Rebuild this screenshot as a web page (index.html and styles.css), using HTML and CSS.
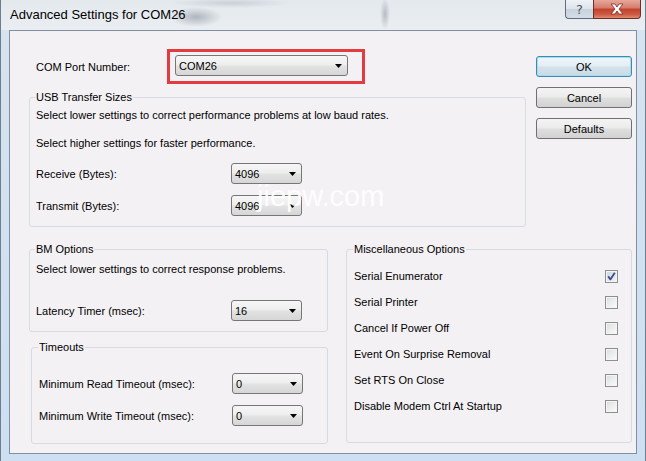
FILE: index.html
```html
<!DOCTYPE html>
<html>
<head>
<meta charset="utf-8">
<title>Advanced Settings for COM26</title>
<link rel="stylesheet" href="styles.css">
</head>
<body>
<div class="window">
  <div class="titlebar">
    <div class="title">Advanced Settings for COM26</div>
    <div class="tb-btn help">?</div>
    <div class="tb-btn close">
      <svg width="16" height="12" viewBox="0 0 16 12"><path d="M2 1 L6 1 L8 4 L10 1 L14 1 L10 6 L14 11 L10 11 L8 8 L6 11 L2 11 L6 6 Z" fill="#fff" stroke="#7a2b20" stroke-width="0.8" stroke-linejoin="round"/></svg>
    </div>
  </div>
  <div class="client">
    <div class="top">
      <div class="top-left">
        <div class="com-row">
          <span class="com-label">COM Port Number:</span>
          <div class="highlight">
            <div class="combo w-com"><span>COM26</span><svg class="arrow" width="7" height="4" viewBox="0 0 7 4"><path d="M0 0 H7 L3.5 4 Z" fill="#000"/></svg></div>
          </div>
        </div>
        <fieldset class="group usb">
          <legend>USB Transfer Sizes</legend>
          <p class="line l1">Select lower settings to correct performance problems at low baud rates.</p>
          <p class="line l2">Select higher settings for faster performance.</p>
          <div class="row r-recv"><span class="row-label w195">Receive (Bytes):</span><div class="combo w-small"><span>4096</span><svg class="arrow" width="7" height="4" viewBox="0 0 7 4"><path d="M0 0 H7 L3.5 4 Z" fill="#000"/></svg></div></div>
          <div class="row r-trans"><span class="row-label w195">Transmit (Bytes):</span><div class="combo w-small"><span>4096</span><svg class="arrow" width="7" height="4" viewBox="0 0 7 4"><path d="M0 0 H7 L3.5 4 Z" fill="#000"/></svg></div></div>
        </fieldset>
      </div>
      <div class="buttons">
        <div class="btn default">OK</div>
        <div class="btn">Cancel</div>
        <div class="btn">Defaults</div>
      </div>
    </div>
    <div class="bottom">
      <div class="bottom-left">
        <fieldset class="group bm">
          <legend>BM Options</legend>
          <p class="line bm-l1">Select lower settings to correct response problems.</p>
          <div class="row r-lat"><span class="row-label w195">Latency Timer (msec):</span><div class="combo w-small"><span>16</span><svg class="arrow" width="7" height="4" viewBox="0 0 7 4"><path d="M0 0 H7 L3.5 4 Z" fill="#000"/></svg></div></div>
        </fieldset>
        <fieldset class="group timeouts">
          <legend>Timeouts</legend>
          <div class="row r-read"><span class="row-label w193">Minimum Read Timeout (msec):</span><div class="combo w-small"><span>0</span><svg class="arrow" width="7" height="4" viewBox="0 0 7 4"><path d="M0 0 H7 L3.5 4 Z" fill="#000"/></svg></div></div>
          <div class="row r-write"><span class="row-label w193">Minimum Write Timeout (msec):</span><div class="combo w-small"><span>0</span><svg class="arrow" width="7" height="4" viewBox="0 0 7 4"><path d="M0 0 H7 L3.5 4 Z" fill="#000"/></svg></div></div>
        </fieldset>
      </div>
      <fieldset class="group misc">
        <legend>Miscellaneous Options</legend>
        <div class="opt first"><span>Serial Enumerator</span><span class="check checked"><svg width="11" height="11" viewBox="0 0 11 11"><path d="M2.2 5.4 L4.4 8.4 L8.8 1.8" fill="none" stroke="#3d4e82" stroke-width="1.8" stroke-linejoin="round"/></svg></span></div>
        <div class="opt"><span>Serial Printer</span><span class="check"></span></div>
        <div class="opt"><span>Cancel If Power Off</span><span class="check"></span></div>
        <div class="opt"><span>Event On Surprise Removal</span><span class="check"></span></div>
        <div class="opt"><span>Set RTS On Close</span><span class="check"></span></div>
        <div class="opt"><span>Disable Modem Ctrl At Startup</span><span class="check"></span></div>
      </fieldset>
    </div>
  </div>
  <div class="watermark">jiepw.com</div>
</div>
</body>
</html>
```

FILE: styles.css
```css
html, body {
  margin: 0;
  padding: 0;
}
body {
  width: 646px;
  height: 461px;
  overflow: hidden;
  font-family: "Liberation Sans", Arial, sans-serif;
  font-size: 11px;
  color: #000;
  background: #cddcec;
}
.window {
  position: relative;
  width: 646px;
  height: 461px;
  box-sizing: border-box;
  border-left: 1px solid #6f7e8e;
  border-right: 1px solid #6f7e8e;
  background:
    radial-gradient(ellipse 26px 10px at 195px 17px, rgba(70,80,92,0.35), rgba(70,80,92,0) 100%),
    radial-gradient(ellipse 5px 16px at 384px 14px, rgba(70,80,92,0.3), rgba(70,80,92,0) 100%),
    radial-gradient(ellipse 60px 5px at 230px 3px, rgba(120,130,140,0.25), rgba(120,130,140,0) 100%),
    linear-gradient(180deg, #e4e9ee 0px, #eaeef2 30px, #d6e3f0 30px, #cddff1 100%);
}
.titlebar {
  height: 30px;
  display: flex;
  align-items: flex-start;
}
.title {
  flex: 1;
  font-size: 13px;
  line-height: 30px;
  padding-left: 9px;
  color: #000;
}
.tb-btn {
  height: 19px;
  box-sizing: border-box;
  display: flex;
  align-items: center;
  justify-content: center;
  border: 1px solid #5f6d7d;
  border-top: none;
}
.help {
  width: 28px;
  border-right: none;
  border-radius: 0 0 0 4px;
  background: linear-gradient(180deg, #eef2f6 0%, #dde4ec 50%, #c8d2dd 51%, #d3dde7 100%);
  color: #4c5561;
  font-size: 13px;
  font-family: "DejaVu Sans", sans-serif;
}
.close {
  width: 48px;
  margin-right: 4px;
  border-color: #6d2f26;
  border-radius: 0 0 4px 0;
  background: linear-gradient(180deg, #e6a89b 0%, #d67c6a 45%, #c2412b 50%, #cd5a44 80%, #e08a72 100%);
}
.client {
  margin-left: 8px;
  width: 628px;
  height: 424px;
  box-sizing: border-box;
  border: 1px solid #7f90a3;
  background: #f4f1f4;
  padding: 18px 0 0 19px;
}
.top {
  display: flex;
  align-items: flex-start;
}
.top-left {
  width: 497px;
}
.com-row {
  display: flex;
  align-items: center;
}
.com-label {
  width: 131px;
  padding-left: 7px;
}
.highlight {
  border: 3px solid #e23b40;
  padding: 3px 14px 5px 5px;
}
.combo {
  display: flex;
  align-items: center;
  justify-content: space-between;
  height: 21px;
  box-sizing: border-box;
  border: 1px solid #767676;
  border-radius: 3px;
  background: linear-gradient(180deg, #f6f6f6 0%, #eeeeee 45%, #e2e2e2 55%, #d6d6d6 100%);
  padding: 0 5px 0 3px;
  line-height: 14px;
}
.w-com { width: 173px; }
.w-small { width: 71px; }
.arrow { display: block; }

.group {
  margin: 0;
  padding: 0;
  border: 1px solid #d6dbe1;
  border-radius: 3px;
  box-sizing: border-box;
  min-width: 0;
}
.group legend {
  padding: 0 1px;
  line-height: 14px;
  margin-left: -1px;
}
.line {
  margin: 0;
  line-height: 14px;
}
.row {
  display: flex;
  align-items: center;
  height: 21px;
}
.w195 { width: 195px; }
.w193 { width: 193px; }

.usb {
  margin-top: 6px;
  width: 497px;
  padding: 0 0 10px 6px;
}
.usb .l1 { margin-top: 4px; }
.usb .l2 { margin-top: 14px; }
.r-recv { margin-top: 13px; }
.r-trans { margin-top: 11px; }

.buttons {
  margin-left: 10px;
  margin-top: 7px;
  width: 96px;
  display: flex;
  flex-direction: column;
  gap: 10px;
}
.btn {
  height: 21px;
  box-sizing: border-box;
  border: 1px solid #707070;
  border-radius: 3px;
  background: linear-gradient(180deg, #f4f4f4 0%, #ececec 45%, #dedede 55%, #d2d2d2 100%);
  display: flex;
  align-items: center;
  justify-content: center;
  font-size: 11px;
}
.btn.default {
  border-color: #3c8bb6;
  box-shadow: inset 0 0 0 1px #a6dcef;
  background: linear-gradient(180deg, #eef6fa 0%, #e4eef4 45%, #d4e2ea 55%, #c9dae4 100%);
}

.bottom {
  display: flex;
  align-items: flex-start;
  margin-top: 15px;
}
.bottom-left {
  width: 299px;
}
.bm {
  width: 299px;
  padding: 0 0 10px 6px;
}
.bm-l1 { margin-top: 6px; }
.r-lat { margin-top: 24px; }

.timeouts {
  margin-top: 8px;
  margin-left: 2px;
  width: 297px;
  padding: 0 0 17px 7px;
}
.r-read { margin-top: 19px; }
.r-write { margin-top: 11px; }

.misc {
  margin-left: 18px;
  width: 286px;
  padding: 0 13px 23px 7px;
}
.opt {
  display: flex;
  align-items: center;
  justify-content: space-between;
  height: 26px;
}
.opt.first { margin-top: 7px; }
.check {
  width: 13px;
  height: 13px;
  box-sizing: border-box;
  border: 1px solid #8e8f8f;
  background: linear-gradient(135deg, #d9dadb 0%, #eceded 50%, #fbfbfb 100%);
  box-shadow: inset 0 0 0 1px #f4f4f4;
  display: flex;
  align-items: center;
  justify-content: center;
}
.check.checked {
  background: linear-gradient(135deg, #c9d2df 0%, #dfe5ee 50%, #f2f5f9 100%);
}
.check svg { display: block; }

.watermark {
  position: absolute;
  left: 256px;
  top: 181px;
  font-size: 29px;
  line-height: 30px;
  color: rgba(255,255,255,0.92);
  pointer-events: none;
}
```
